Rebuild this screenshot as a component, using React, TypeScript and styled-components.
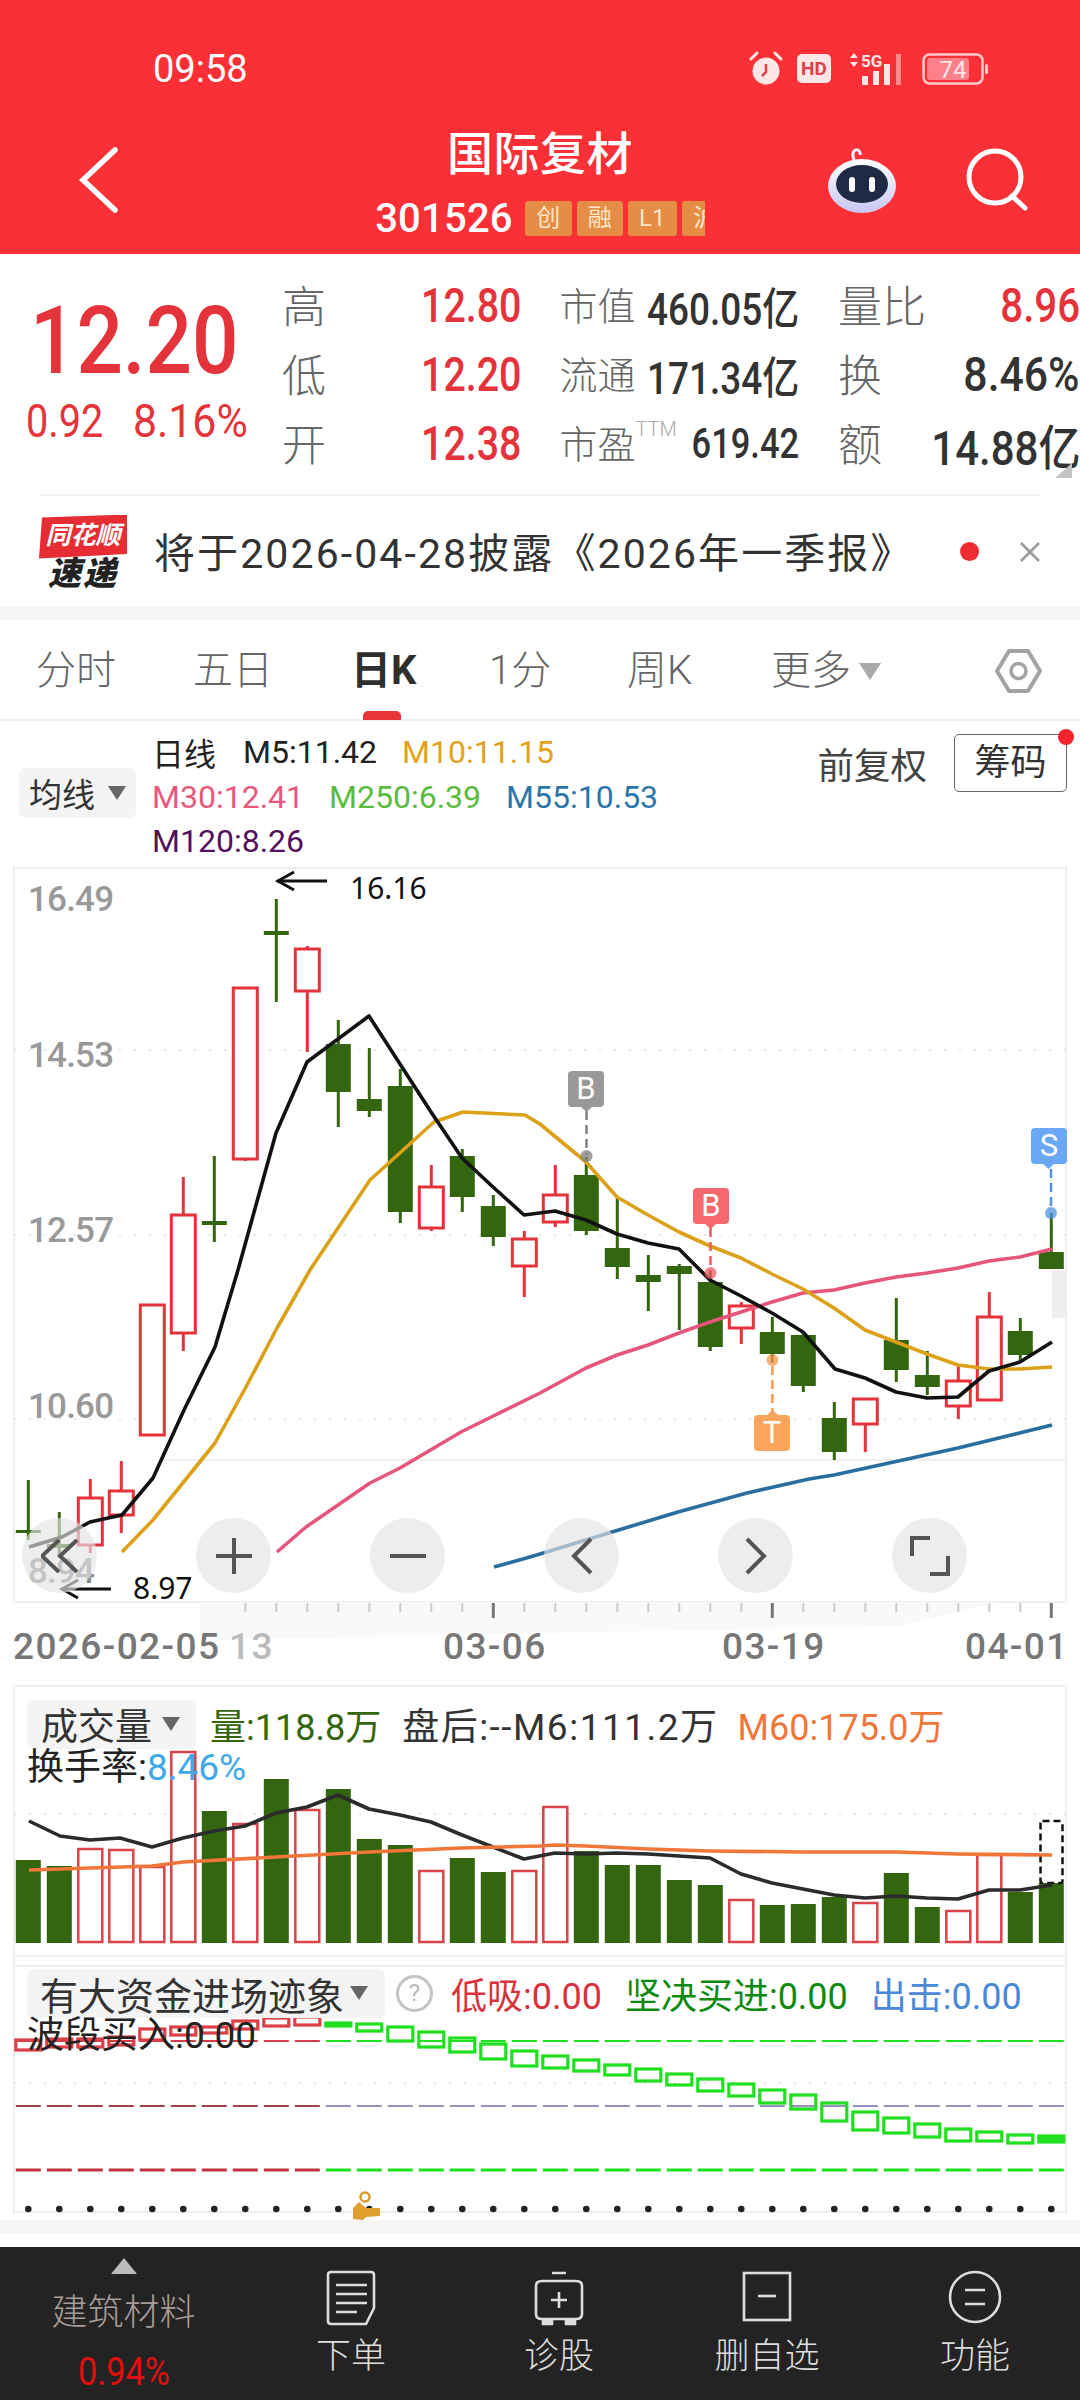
import React from "react";
import styled, { createGlobalStyle } from "styled-components";

const colors = {
  red: "#fb2f36",
  up: "#e4333a",
  down: "#33660f",
  text: "#333333",
  gray: "#666666",
  axis: "#999999",
  line: "#eeeeee",
  bright: "#1fe01f",
};

const cjk = `"Noto Sans CJK SC", sans-serif`;
const roboto = `Roboto, ${cjk}`;

const GlobalStyle = createGlobalStyle`
  html, body { margin: 0; padding: 0; background: #fff; }
  body { font-family: ${roboto}; }
  * { box-sizing: border-box; }
`;

const Page = styled.div`
  position: relative;
  width: 1080px;
  height: 2400px;
  overflow: hidden;
  display: flex;
  flex-direction: column;
  background: #fff;
`;

/* header */
const Header = styled.header`
  height: 254px;
  background: ${colors.red};
  color: #fff;
  flex: none;
`;

const StatusBar = styled.div`
  display: flex;
  justify-content: space-between;
  align-items: center;
  height: 40px;
  margin-top: 49px;
  padding: 0 92px 0 153px;
`;

const Clock = styled.span`
  font-size: 38px;
  line-height: 40px;
`;

const StatusIcons = styled.div`
  display: flex;
  align-items: center;
`;

const HeadRow = styled.div`
  display: grid;
  grid-template-columns: 1fr auto 1fr;
  align-items: center;
  margin-top: 37px;
`;

const BackIcon = styled.svg`
  margin-left: 78px;
  margin-top: -6px;
  display: block;
`;

const TitleBlock = styled.div`
  display: flex;
  flex-direction: column;
  align-items: center;
`;

const Title = styled.div`
  font-size: 46px;
  line-height: 58px;
  font-weight: 500;
  letter-spacing: 0.5px;
  margin-top: -1px;
`;

const CodeRow = styled.div`
  display: flex;
  align-items: center;
  gap: 12px;
  margin-top: 13px;
  height: 44px;
`;

const Code = styled.span`
  font-size: 40px;
  font-weight: 500;
  letter-spacing: 0.2px;
`;

const TagStrip = styled.div`
  display: flex;
  gap: 5px;
  width: 180px;
  overflow: hidden;
`;

const Tag = styled.span`
  flex: none;
  width: ${(p) => p.$w ?? 47}px;
  height: 35px;
  border-radius: 3px;
  background: #e58d45;
  color: #ffe6c8;
  font-size: 24px;
  line-height: 35px;
  text-align: center;
`;

const HeadTools = styled.div`
  display: flex;
  justify-content: flex-end;
  align-items: center;
  gap: 69px;
  padding-right: 52px;
  margin-top: -6px;
`;

/* quote: the reference digits are tall and narrow, so they are squeezed sideways */
const Quote = styled.section`
  display: flex;
  height: 240px;
  flex: none;
`;

const PriceBox = styled.div`
  width: 282px;
  flex: none;
  padding-top: 46px;
  color: ${colors.up};
`;

const Price = styled.div`
  font-size: 95px;
  font-weight: 500;
  line-height: 82px;
  padding-left: 30px;
  transform: scaleX(0.86);
  transform-origin: 30px 50%;
`;

const PriceDelta = styled.div`
  display: flex;
  gap: 17px;
  margin-top: 19px;
  padding-left: 26px;
  font-size: 46px;
  line-height: 40px;
`;

const DeltaValue = styled.span`
  display: inline-block;
  transform: scaleX(${(p) => p.$sx});
  transform-origin: 0 50%;
`;

const StatGrid = styled.div`
  display: grid;
  grid-template-columns: 239px 240px 242px;
  grid-auto-rows: 69px;
  column-gap: 38.5px;
  padding-top: 17px;
  height: 225px;
`;

const Stat = styled.div`
  display: flex;
  justify-content: space-between;
  align-items: center;
  white-space: nowrap;
`;

const StatLabel = styled.span`
  font-size: ${(p) => p.$size ?? 44}px;
  color: ${colors.gray};
  font-weight: 300;
  display: flex;
  align-items: flex-start;
  margin-top: -4px;
`;

const Ttm = styled.sup`
  font-size: 20px;
  line-height: 30px;
  color: #aaa;
  font-family: Roboto, sans-serif;
`;

const StatValue = styled.span`
  display: inline-block;
  margin-left: -80px;
  font-size: ${(p) => p.$size ?? 48}px;
  font-weight: 500;
  color: ${(p) => p.$color ?? "#333"};
  transform: scaleX(${(p) => p.$sx ?? 0.82});
  transform-origin: 100% 50%;
`;

const Corner = styled.div`
  position: absolute;
  left: 1055px;
  top: 463px;
  width: 0;
  height: 0;
  border-left: 17px solid transparent;
  border-bottom: 15px solid #c4c4c4;
`;

/* notice */
const Notice = styled.section`
  position: relative;
  display: flex;
  align-items: center;
  height: 113px;
  flex: none;
  margin: 0 40px;
  border-top: 2px solid #f1f1f1;
`;

const Logo = styled.div`
  width: 88px;
  display: flex;
  flex-direction: column;
  align-items: center;
  flex: none;
  margin-left: -1px;
`;

const LogoTag = styled.div`
  width: 88px;
  height: 44px;
  background: #e52d33;
  color: #fff;
  font-size: 25px;
  font-weight: 700;
  font-style: italic;
  line-height: 42px;
  text-align: center;
  white-space: nowrap;
  clip-path: polygon(3px 3px, 100% 0, 100% 90%, 0 100%);
`;

const LogoText = styled.div`
  font-size: 33px;
  font-weight: 900;
  font-style: italic;
  line-height: 30px;
  letter-spacing: 2px;
  color: #222;
`;

const NoticeText = styled.div`
  font-size: 41px;
  color: ${colors.text};
  margin: -3px 0 0 27px;
  letter-spacing: 2.1px;
  white-space: nowrap;
  flex: 1;
`;

const RedDot = styled.span`
  width: 19px;
  height: 19px;
  border-radius: 50%;
  background: #f02c30;
  flex: none;
  margin-right: 40px;
`;

const Band = styled.div`
  height: ${(p) => p.$h}px;
  background: ${(p) => p.$bg ?? "#f6f6f6"};
  flex: none;
`;

/* tabs */
const Tabs = styled.nav`
  position: relative;
  height: 101px;
  flex: none;
  display: flex;
  align-items: center;
  padding: 0 0 0 36px;
  border-bottom: 2px solid #eeeeee;
`;

const TabItem = styled.span`
  font-size: 40px;
  line-height: 56px;
  width: ${(p) => p.$w}px;
  flex: none;
  margin-top: 3px;
  display: flex;
  align-items: center;
  color: ${(p) => (p.$active ? "#2f2f2f" : colors.gray)};
  font-weight: ${(p) => (p.$active ? 700 : 300)};
  &::after {
    content: "";
    display: ${(p) => (p.$active ? "block" : "none")};
    position: absolute;
    left: 363px;
    bottom: -1px;
    width: 38px;
    height: 9px;
    border-radius: 5px 5px 0 0;
    background: #e9343a;
  }
`;

const Caret = styled.i`
  display: inline-block;
  width: 0;
  height: 0;
  flex: none;
  margin-left: ${(p) => p.$gap ?? 8}px;
  border-left: ${(p) => p.$w ?? 9}px solid transparent;
  border-right: ${(p) => p.$w ?? 9}px solid transparent;
  border-top: ${(p) => p.$h ?? 14}px solid ${(p) => p.$color ?? "#aaa"};
`;

/* legend */
const Legend = styled.section`
  height: 147px;
  flex: none;
  position: relative;
  display: flex;
  padding-left: 19px;
`;

const Pill = styled.div`
  width: ${(p) => p.$w}px;
  height: ${(p) => p.$h ?? 50}px;
  flex: none;
  display: flex;
  align-items: center;
  padding-left: ${(p) => p.$pad ?? 10}px;
  background: #f5f4f4;
  border-radius: 7px;
  font-size: ${(p) => p.$size ?? 33}px;
  color: ${colors.text};
  white-space: nowrap;
`;

const LegendPillWrap = styled.div`
  margin-top: 47px;
`;

const LegendLines = styled.div`
  margin-left: 16px;
  padding-top: 9px;
  display: flex;
  flex-direction: column;
`;

const LegendRow = styled.div`
  display: flex;
  gap: 25px;
  height: 44.5px;
  align-items: center;
  font-size: 32px;
  white-space: nowrap;
`;

const Ma = styled.span`
  color: ${(p) => p.$color};
  margin-left: ${(p) => p.$shift ?? 0}px;
`;

const LegendTools = styled.div`
  position: absolute;
  right: 13px;
  top: 13px;
  display: flex;
  align-items: center;
  gap: 27px;
`;

const Fq = styled.span`
  font-size: 36.5px;
  color: #444;
`;

const ChipBtn = styled.div`
  position: relative;
  width: 113px;
  height: 58px;
  border: 1.5px solid #666;
  border-radius: 5px;
  font-size: 36px;
  line-height: 56px;
  text-align: center;
  color: #333;
  &::after {
    content: "";
    position: absolute;
    right: -8px;
    top: -6px;
    width: 16px;
    height: 16px;
    border-radius: 50%;
    background: #f5242c;
  }
`;

/* charts */
const ChartBox = styled.section`
  position: relative;
  width: 1080px;
  height: ${(p) => p.$h}px;
  flex: none;
`;

const ChartSvg = styled.svg`
  position: absolute;
  left: 0;
  top: 0;
  overflow: visible;
  display: block;
`;

const PriceTick = styled.span`
  position: absolute;
  left: 28px;
  top: ${(p) => p.$y}px;
  font-size: 35px;
  font-weight: 500;
  line-height: 36px;
  letter-spacing: -0.8px;
  color: ${(p) => p.$color ?? colors.axis};
`;

const Extreme = styled.span`
  position: absolute;
  left: ${(p) => p.$x}px;
  top: ${(p) => p.$y}px;
  font-family: "Noto Sans", sans-serif;
  font-size: 30px;
  line-height: 36px;
  color: #111;
`;

const Signal = styled.div`
  position: absolute;
  left: ${(p) => p.$x}px;
  top: ${(p) => p.$y}px;
  width: 36px;
  height: 36px;
  border-radius: 4px;
  background: ${(p) => p.$color};
  color: #fff;
  font-size: 31px;
  line-height: 36px;
  text-align: center;
`;

const Controls = styled.div`
  position: absolute;
  left: 22px;
  top: 650px;
  display: flex;
  gap: 99px;
`;

const Round = styled.div`
  width: 75px;
  height: 75px;
  border-radius: 50%;
  background: rgba(228, 228, 228, 0.65);
  display: flex;
  align-items: center;
  justify-content: center;
`;

const DateTick = styled.span`
  position: absolute;
  left: ${(p) => p.$x}px;
  top: 23px;
  font-size: 37px;
  font-weight: 500;
  line-height: 44px;
  letter-spacing: 1.4px;
  color: ${(p) => p.$color ?? "#777"};
  white-space: nowrap;
`;

const PanelHead = styled.div`
  position: relative;
  display: flex;
  align-items: center;
  gap: ${(p) => p.$gap ?? 21}px;
  padding-left: 27px;
  padding-top: ${(p) => p.$top}px;
  white-space: nowrap;
  font-size: 36px;
`;

const PanelLine = styled.div`
  position: relative;
  padding-left: 27px;
  margin-top: -3px;
  height: 40px;
  line-height: 40px;
  font-size: 37px;
  color: ${(p) => p.$color ?? "#222"};
  white-space: nowrap;
`;

const Colored = styled.span`
  color: ${(p) => p.$color};
  margin-left: ${(p) => p.$shift ?? 0}px;
  letter-spacing: ${(p) => p.$track ?? 0}px;
  font-size: ${(p) => p.$size ?? 36}px;
`;

const Help = styled.span`
  width: 37px;
  height: 37px;
  border-radius: 50%;
  border: 3px solid #c4c4c4;
  color: #bbb;
  font-size: 24px;
  line-height: 31px;
  text-align: center;
  flex: none;
  margin: 0 -5px 0 -12px;
`;

/* bottom bar */
const BottomBar = styled.footer`
  height: 153px;
  flex: none;
  background: #232323;
  display: grid;
  grid-template-columns: 247px repeat(4, 208px);
`;

const Sector = styled.div`
  display: flex;
  flex-direction: column;
  align-items: center;
  padding: 11px 0 0 0;
`;

const UpTriangle = styled.i`
  width: 0;
  height: 0;
  border-left: 13px solid transparent;
  border-right: 13px solid transparent;
  border-bottom: 16px solid #bbbbbb;
`;

const SectorName = styled.span`
  font-size: 36px;
  line-height: 44px;
  margin-top: 17px;
  color: #a89c98;
  font-weight: 300;
`;

const SectorPct = styled.span`
  font-size: 38px;
  line-height: 44px;
  margin-top: 15px;
  color: #e01010;
  transform: scaleX(0.9);
`;

const BarItem = styled.div`
  display: flex;
  flex-direction: column;
  align-items: center;
  padding-top: 23px;
  color: #dddddd;
  font-size: 35px;
  line-height: 44px;
  font-weight: 300;
`;

const BarIcon = styled.svg`
  display: block;
  margin-bottom: 9px;
`;

/* data: every candle sits at xAt(i), values are pixel rows of the chart */
const xAt = (i: number) => 28.3 + 31 * i;

type Candle = [number, number, number, number, boolean];
const candles: Candle[] = [
  [1480, 1530, 1533, 1540, false],
  [1512, 1544, 1548, 1557, false],
  [1479, 1498, 1545, 1553, true],
  [1461, 1491, 1515, 1533, true],
  [1305, 1305, 1435, 1436, true],
  [1177, 1215, 1333, 1351, true],
  [1156, 1221, 1225, 1242, false],
  [988, 988, 1159, 1161, true],
  [899, 931, 935, 1002, false],
  [946, 949, 991, 1052, true],
  [1020, 1044, 1092, 1127, false],
  [1048, 1099, 1111, 1117, false],
  [1069, 1086, 1212, 1223, false],
  [1165, 1187, 1228, 1231, true],
  [1149, 1156, 1197, 1212, false],
  [1195, 1206, 1237, 1246, false],
  [1231, 1239, 1266, 1297, true],
  [1165, 1195, 1222, 1227, true],
  [1157, 1175, 1231, 1235, false],
  [1197, 1248, 1267, 1279, false],
  [1255, 1275, 1282, 1311, false],
  [1264, 1266, 1274, 1330, false],
  [1270, 1282, 1347, 1351, false],
  [1302, 1306, 1328, 1344, true],
  [1317, 1332, 1354, 1363, false],
  [1331, 1335, 1386, 1392, false],
  [1402, 1418, 1452, 1460, false],
  [1399, 1399, 1424, 1452, true],
  [1298, 1340, 1370, 1382, false],
  [1351, 1375, 1387, 1395, false],
  [1366, 1381, 1406, 1419, true],
  [1292, 1317, 1400, 1400, true],
  [1318, 1331, 1355, 1362, false],
  [1213, 1252, 1269, 1269, false],
];

const m5 = "29,1547 62,1537 90,1522 122,1515 153,1478 184,1410 215,1347 238,1270 276,1133 307,1062 369,1016 400,1064 431,1112 462,1158 493,1187 524,1215 555,1211 586,1220 617,1234 648,1243 679,1249 710,1280 741,1296 772,1313 803,1332 835,1369 865,1378 896,1392 927,1398 958,1397 989,1371 1020,1362 1052,1342";
const m10 = "122,1552 153,1520 215,1443 246,1387 277,1328 310,1270 370,1180 434,1122 463,1112 525,1115 540,1124 586,1162 617,1197 648,1215 679,1232 710,1246 741,1258 772,1274 803,1289 834,1308 865,1330 896,1342 927,1354 958,1365 989,1369 1020,1369 1052,1367";
const m30 = "277,1552 306,1527 370,1483 400,1468 461,1432 540,1393 586,1368 617,1355 648,1345 679,1333 710,1322 741,1312 772,1302 803,1293 834,1290 865,1283 896,1277 927,1273 958,1268 989,1261 1020,1257 1052,1249";
const m55 = "494,1567 523,1559 540,1554 612,1532 678,1512 747,1493 809,1479 834,1475 958,1448 1052,1425";

const volumes: [number, boolean][] = [
  [1860, false], [1866, false], [1849, true], [1850, true], [1867, true], [1752, true], [1811, false],
  [1824, true], [1779, false], [1810, true], [1789, false], [1839, false], [1845, false], [1871, true],
  [1858, false], [1872, false], [1871, true], [1807, true], [1851, false], [1865, false], [1865, false],
  [1880, false], [1885, false], [1900, true], [1905, false], [1904, false], [1897, false], [1903, true],
  [1873, false], [1907, false], [1911, true], [1855, true], [1892, false], [1883, false],
];

const m6 = "29,1821 60,1836 90,1840 120,1838 152,1847 183,1838 214,1831 245,1826 276,1813 307,1807 338,1795 369,1809 400,1815 431,1822 462,1835 493,1847 524,1859 555,1853 586,1854 617,1853 648,1854 679,1856 710,1858 741,1874 772,1883 803,1889 834,1895 865,1898 896,1896 927,1898 958,1899 989,1890 1020,1890 1052,1885";
const m60 = "29,1870 152,1866 183,1862 276,1857 369,1852 462,1848 540,1846 555,1845 586,1846 648,1849 710,1851 803,1852 896,1852 958,1854 1052,1855";

const waves: [number, number][] = [
  [2040, 2050], [2039, 2047], [2039, 2047], [2037, 2045], [2029, 2040], [2027, 2035], [2027, 2033], [2021, 2029],
  [2018, 2026], [2017, 2025], [2023, 2026], [2024, 2031], [2027, 2041], [2032, 2047], [2038, 2052], [2044, 2059],
  [2051, 2066], [2056, 2068], [2060, 2071], [2065, 2075], [2069, 2081], [2074, 2085], [2079, 2091], [2084, 2096],
  [2090, 2103], [2095, 2109], [2103, 2121], [2112, 2130], [2118, 2133], [2124, 2137], [2129, 2141], [2132, 2141],
  [2135, 2143], [2136, 2142],
];

const indices = candles.map((_, i) => i);

function DottedGrid({ rows }: { rows: number[] }) {
  return (
    <>
      {rows.map((y) => (
        <line key={y} x1="14" x2="1066" y1={y} y2={y} stroke="#e4e4e4" strokeWidth="2" strokeDasharray="2 13" />
      ))}
    </>
  );
}

function Frame({ top, bottom }: { top: number; bottom: number }) {
  return <rect x="14" y={top} width="1052" height={bottom - top} fill="none" stroke="#eeeeee" strokeWidth="2" />;
}

function MaLine({ points, color, width = 3.6 }: { points: string; color: string; width?: number }) {
  return <polyline points={points} fill="none" stroke={color} strokeWidth={width} strokeLinejoin="round" />;
}

function Arrow({ x, y }: { x: number; y: number }) {
  return (
    <g fill="none" stroke="#111" strokeWidth="3">
      <line x1={x} x2={x + 50} y1={y} y2={y} />
      <polyline points={`${x + 17},${y - 9} ${x + 1},${y} ${x + 17},${y + 9}`} />
    </g>
  );
}

function Stem({ x, from, to, color, r }: { x: number; from: number; to: number; color: string; r: number }) {
  return (
    <g>
      <line x1={x} x2={x} y1={from} y2={to} stroke={color} strokeWidth="2.5" strokeDasharray="9 5" />
      <circle cx={x} cy={r} r="6" fill={color} opacity="0.75" />
    </g>
  );
}

function PriceChart() {
  return (
    <ChartSvg width="1080" height="734" viewBox="0 868 1080 734">
      <Frame top={868} bottom={1602} />
      <DottedGrid rows={[1050, 1235, 1419]} />
      <line x1="160" x2="1066" y1="1460" y2="1460" stroke="#eeeeee" strokeWidth="2" />
      <rect x="1052" y="1270" width="14" height="48" fill="#eeeeee" />
      {candles.map(([high, top, bottom, low, up], i) => {
        const x = xAt(i);
        const color = up ? colors.up : colors.down;
        return (
          <g key={i}>
            <line x1={x} x2={x} y1={high} y2={low} stroke={color} strokeWidth="3" />
            {up ? (
              <rect x={x - 12} y={top} width="24" height={bottom - top} fill="#fff" stroke={color} strokeWidth="3" />
            ) : (
              <rect x={x - 12.5} y={top} width="25" height={bottom - top} fill={color} />
            )}
          </g>
        );
      })}
      <MaLine points={m55} color="#2a6ea0" />
      <MaLine points={m30} color="#e5567a" />
      <MaLine points={m10} color="#dca019" />
      <MaLine points={m5} color="#111111" />
      <Arrow x={277} y={881} />
      <Arrow x={61} y={1589} />
      <Stem x={586.5} from={1111} to={1155} r={1156} color="#808080" />
      <Stem x={710.5} from={1228} to={1272} r={1273} color="#ee5a60" />
      <Stem x={772.4} from={1366} to={1412} r={1360} color="#f39a4e" />
      <Stem x={1051} from={1169} to={1211} r={1213} color="#4f94e6" />
      <polygon points="581,1107 592,1107 586.5,1112" fill="#999" />
      <polygon points="705,1224 716,1224 710.5,1229" fill="#f4686e" />
      <polygon points="767,1415 778,1415 772.5,1410" fill="#fba45c" />
      <polygon points="1043,1164 1054,1164 1048.5,1169" fill="#6aa8f5" />
    </ChartSvg>
  );
}

function AxisTicks() {
  const big = [15, 24, 33];
  return (
    <ChartSvg width="1080" height="83" viewBox="0 1602 1080 83">
      <polygon points="200,1602 1000,1602 900,1626 600,1632 200,1640" fill="#faf9f9" />
      {indices.slice(7).map((i) =>
        big.includes(i) ? (
          <line key={i} x1={xAt(i)} x2={xAt(i)} y1="1603" y2="1618" stroke="#777" strokeWidth="3" />
        ) : (
          <line key={i} x1={xAt(i)} x2={xAt(i)} y1="1603" y2="1612" stroke="#ccc" strokeWidth="2" />
        ),
      )}
    </ChartSvg>
  );
}

function VolumeChart() {
  return (
    <ChartSvg width="1080" height="270" viewBox="0 1685 1080 270">
      <rect x="14" y="1686" width="1052" height="280" fill="none" stroke="#eeeeee" strokeWidth="2" />
      <DottedGrid rows={[1814]} />
      {volumes.map(([top, up], i) => {
        const x = xAt(i);
        return up ? (
          <rect key={i} x={x - 12} y={top} width="24" height={1942 - top} fill="#fff" stroke="#d9434a" strokeWidth="2.5" />
        ) : (
          <rect key={i} x={x - 12.5} y={top} width="25" height={1943 - top} fill={colors.down} />
        );
      })}
      <rect x="1040.5" y="1821" width="22" height="62" fill="none" stroke="#111" strokeWidth="2.5" strokeDasharray="7 4" rx="2" />
      <MaLine points={m6} color="#2b2b2b" />
      <MaLine points={m60} color="#f0763a" />
    </ChartSvg>
  );
}

function WaveChart() {
  return (
    <ChartSvg width="1080" height="265" viewBox="0 1955 1080 265">
      <rect x="14" y="1956" width="1052" height="256" fill="none" stroke="#eeeeee" strokeWidth="2" />
      <DottedGrid rows={[2083]} />
      <rect x="357" y="2009" width="24" height="9" fill="#7fe07f" />
      {indices.map((i) => {
        const x = xAt(i);
        const buy = i < 10;
        return (
          <g key={i}>
            <line x1={x - 12.5} x2={x + 12.5} y1="2041" y2="2041" stroke={buy ? "#d23e46" : colors.bright} strokeWidth="2" />
            <line x1={x - 12.5} x2={x + 12.5} y1="2106" y2="2106" stroke={buy ? "#a8404a" : "#9a90c0"} strokeWidth="2" />
            <line x1={x - 12.5} x2={x + 12.5} y1="2170" y2="2170" stroke={buy ? "#c0323e" : colors.bright} strokeWidth="3" />
            <circle cx={x} cy="2209" r="3.3" fill="#222" />
          </g>
        );
      })}
      {waves.map(([top, bottom], i) => {
        const x = xAt(i);
        const color = i < 10 ? "#dd3f48" : colors.bright;
        return (
          <rect
            key={i}
            x={x - 12.5}
            y={top}
            width="25"
            height={bottom - top}
            fill={i === 33 || i === 10 ? color : "none"}
            stroke={color}
            strokeWidth="3.2"
          />
        );
      })}
      <g>
        <circle cx="365" cy="2197" r="4.5" fill="none" stroke="#d99a2b" strokeWidth="2.5" />
        <path d="M353 2219 L353 2208 L359 2202 L366 2208 L380 2208 L380 2216 L366 2217 L363 2220 Z" fill="#e0a030" />
      </g>
    </ChartSvg>
  );
}

function AlarmIcon() {
  return (
    <svg width="36" height="36" viewBox="0 0 36 36">
      <circle cx="18" cy="20" r="13.5" fill="#ffe6e6" />
      <path d="M3 8 L9 2 M33 8 L27 2" stroke="#ffe6e6" strokeWidth="3" strokeLinecap="round" />
      <path d="M18 13 L18 21 L14 25" stroke="#e04048" strokeWidth="2.5" fill="none" />
    </svg>
  );
}

function HdIcon() {
  return (
    <svg width="34" height="30" viewBox="0 0 34 30" style={{ marginLeft: 13 }}>
      <rect width="34" height="29" rx="5" fill="#ffe6e6" />
      <text x="17" y="21" textAnchor="middle" fontSize="19" fontWeight="700" fontFamily="Roboto" fill="#e04048">
        HD
      </text>
    </svg>
  );
}

function SignalIcon() {
  return (
    <svg width="60" height="36" viewBox="0 0 60 36" style={{ marginLeft: 15 }}>
      <path d="M4 7 L8 2 L12 7 Z M4 11 L12 11 L8 16 Z" fill="#ffe6e6" />
      <text x="15" y="16" fontSize="17" fontWeight="700" fontFamily="Roboto" fill="#ffe6e6">
        5G
      </text>
      <rect x="16" y="25" width="6" height="9" fill="#ffe6e6" />
      <rect x="27" y="20" width="6" height="14" fill="#ffe6e6" />
      <rect x="38" y="13" width="6" height="21" fill="#ffe6e6" />
      <rect x="50" y="3" width="5" height="31" fill="#ff8a8a" />
    </svg>
  );
}

function BatteryIcon() {
  return (
    <svg width="66" height="32" viewBox="0 0 66 32" style={{ marginLeft: 16 }}>
      <rect x="1.5" y="1.5" width="59" height="29" rx="6" fill="none" stroke="#ffc9c9" strokeWidth="2.5" />
      <rect x="5" y="5" width="42" height="22" rx="3" fill="#ff8088" />
      <rect x="63" y="11" width="3" height="10" rx="1.5" fill="#ffc9c9" />
      <text x="31" y="25" textAnchor="middle" fontSize="24" fontFamily="Roboto" fill="#ffe6e6">
        74
      </text>
    </svg>
  );
}

function RobotIcon() {
  return (
    <svg width="70" height="66" viewBox="0 0 70 66">
      <defs>
        <linearGradient id="robotShell" x1="0" y1="0" x2="0" y2="1">
          <stop offset="0" stopColor="#ffffff" />
          <stop offset="1" stopColor="#c7c6f2" />
        </linearGradient>
      </defs>
      <path d="M28 18 C27 10 24 8 27 4 C30 1 34 4 33 8" fill="none" stroke="#eeeeff" strokeWidth="3" />
      <ellipse cx="35" cy="39" rx="34" ry="27" fill="url(#robotShell)" />
      <ellipse cx="35" cy="37" rx="26" ry="19" fill="#1f2a44" />
      <rect x="22" y="30" width="6" height="15" rx="3" fill="#fff" />
      <rect x="42" y="30" width="6" height="15" rx="3" fill="#fff" />
    </svg>
  );
}

function SearchIcon() {
  return (
    <svg width="62" height="64" viewBox="0 0 62 64" fill="none" stroke="#fff" strokeWidth="5">
      <circle cx="29" cy="29" r="26" />
      <path d="M46 48 L59 60" strokeLinecap="round" />
    </svg>
  );
}

function HexIcon() {
  return (
    <svg width="47" height="46" viewBox="0 0 47 46" fill="none" stroke="#a3a3a3" strokeWidth="4" strokeLinejoin="round" style={{ position: "absolute", left: 995, top: 28 }}>
      <path d="M14 3 L33 3 L45 23 L33 43 L14 43 L2 23 Z" />
      <circle cx="23.5" cy="23" r="7.5" strokeWidth="3.5" />
    </svg>
  );
}

function IconStroke({ children }: { children: React.ReactNode }) {
  return (
    <BarIcon width="62" height="56" viewBox="0 0 62 56" fill="none" stroke="#dddddd" strokeWidth="2.6">
      {children}
    </BarIcon>
  );
}

export default function App() {
  return (
    <Page>
      <GlobalStyle />
      <Header>
        <StatusBar>
          <Clock>09:58</Clock>
          <StatusIcons>
            <AlarmIcon />
            <HdIcon />
            <SignalIcon />
            <BatteryIcon />
          </StatusIcons>
        </StatusBar>
        <HeadRow>
          <BackIcon width="40" height="66" viewBox="0 0 40 66" fill="none" stroke="#fff" strokeWidth="5.5">
            <polyline points="37,3 5,33 37,63" strokeLinecap="round" />
          </BackIcon>
          <TitleBlock>
            <Title>国际复材</Title>
            <CodeRow>
              <Code>301526</Code>
              <TagStrip>
                <Tag>创</Tag>
                <Tag $w={46}>融</Tag>
                <Tag $w={49}>L1</Tag>
                <Tag>沪</Tag>
              </TagStrip>
            </CodeRow>
          </TitleBlock>
          <HeadTools>
            <RobotIcon />
            <SearchIcon />
          </HeadTools>
        </HeadRow>
      </Header>

      <Quote>
        <PriceBox>
          <Price>12.20</Price>
          <PriceDelta>
            <DeltaValue $sx={0.86}>0.92</DeltaValue>
            <DeltaValue $sx={0.93}>8.16%</DeltaValue>
          </PriceDelta>
        </PriceBox>
        <StatGrid>
          <Stat>
            <StatLabel>高</StatLabel>
            <StatValue $color={colors.up}>12.80</StatValue>
          </Stat>
          <Stat>
            <StatLabel $size={38}>市值</StatLabel>
            <StatValue $size={44} $sx={0.84}>460.05亿</StatValue>
          </Stat>
          <Stat>
            <StatLabel>量比</StatLabel>
            <StatValue $color={colors.up} $sx={0.84}>8.96</StatValue>
          </Stat>
          <Stat>
            <StatLabel>低</StatLabel>
            <StatValue $color={colors.up}>12.20</StatValue>
          </Stat>
          <Stat>
            <StatLabel $size={38}>流通</StatLabel>
            <StatValue $size={44} $sx={0.84}>171.34亿</StatValue>
          </Stat>
          <Stat>
            <StatLabel>换</StatLabel>
            <StatValue $sx={0.89}>8.46%</StatValue>
          </Stat>
          <Stat>
            <StatLabel>开</StatLabel>
            <StatValue $color={colors.up}>12.38</StatValue>
          </Stat>
          <Stat>
            <StatLabel $size={38}>
              市盈<Ttm>TTM</Ttm>
            </StatLabel>
            <StatValue $size={42}>619.42</StatValue>
          </Stat>
          <Stat>
            <StatLabel>额</StatLabel>
            <StatValue $sx={0.875}>14.88亿</StatValue>
          </Stat>
        </StatGrid>
        <Corner />
      </Quote>

      <Notice>
        <Logo>
          <LogoTag>同花顺</LogoTag>
          <LogoText>速递</LogoText>
        </Logo>
        <NoticeText>将于2026-04-28披露《2026年一季报》</NoticeText>
        <RedDot />
        <svg width="22" height="22" viewBox="0 0 22 22" stroke="#9a9a9a" strokeWidth="2.5" style={{ marginRight: -1 }}>
          <path d="M2 2 L20 20 M20 2 L2 20" />
        </svg>
      </Notice>
      <Band $h={13} />

      <Tabs>
        <TabItem $w={157}>分时</TabItem>
        <TabItem $w={158}>五日</TabItem>
        <TabItem $w={138} $active>
          日K
        </TabItem>
        <TabItem $w={138}>1分</TabItem>
        <TabItem $w={144}>周K</TabItem>
        <TabItem $w={150}>
          更多
          <Caret $w={11} $h={17} />
        </TabItem>
        <HexIcon />
      </Tabs>

      <Legend>
        <LegendPillWrap>
          <Pill $w={117} $pad={10}>
            均线
            <Caret $gap={13} $color="#666" />
          </Pill>
        </LegendPillWrap>
        <LegendLines>
          <LegendRow>
            <Ma $color="#222">日线</Ma>
            <Ma $color="#222" $shift={2}>M5:11.42</Ma>
            <Ma $color="#e3a21d">M10:11.15</Ma>
          </LegendRow>
          <LegendRow>
            <Ma $color="#e9587c">M30:12.41</Ma>
            <Ma $color="#5bbb3e">M250:6.39</Ma>
            <Ma $color="#2a76ab">M55:10.53</Ma>
          </LegendRow>
          <LegendRow>
            <Ma $color="#560f5c">M120:8.26</Ma>
          </LegendRow>
        </LegendLines>
        <LegendTools>
          <Fq>前复权</Fq>
          <ChipBtn>筹码</ChipBtn>
        </LegendTools>
      </Legend>

      <ChartBox $h={734}>
        <PriceChart />
        <PriceTick $y={14}>16.49</PriceTick>
        <PriceTick $y={170}>14.53</PriceTick>
        <PriceTick $y={345}>12.57</PriceTick>
        <PriceTick $y={521}>10.60</PriceTick>
        <PriceTick $y={686} $color="#8a8a8a">
          8.94
        </PriceTick>
        <Extreme $x={350} $y={2}>16.16</Extreme>
        <Extreme $x={133} $y={702}>8.97</Extreme>
        <Signal $x={568} $y={203} $color="#999999">B</Signal>
        <Signal $x={693} $y={320} $color="#f4686e">B</Signal>
        <Signal $x={754} $y={547} $color="#fba45c">T</Signal>
        <Signal $x={1031} $y={260} $color="#6aa8f5">S</Signal>
        <Controls>
          <Round>
            <svg width="38" height="34" viewBox="0 0 38 34" fill="none" stroke="#555" strokeWidth="4">
              <path d="M18 1 L1 17 L18 33 M36 1 L19 17 L36 33" />
            </svg>
          </Round>
          <Round>
            <svg width="36" height="36" viewBox="0 0 36 36" stroke="#555" strokeWidth="4">
              <path d="M0 18 H36 M18 0 V36" />
            </svg>
          </Round>
          <Round>
            <svg width="36" height="6" viewBox="0 0 36 6" stroke="#555" strokeWidth="4">
              <path d="M0 3 H36" />
            </svg>
          </Round>
          <Round>
            <svg width="22" height="38" viewBox="0 0 22 38" fill="none" stroke="#555" strokeWidth="4">
              <path d="M20 2 L3 19 L20 36" />
            </svg>
          </Round>
          <Round>
            <svg width="22" height="38" viewBox="0 0 22 38" fill="none" stroke="#555" strokeWidth="4">
              <path d="M2 2 L19 19 L2 36" />
            </svg>
          </Round>
          <Round>
            <svg width="40" height="40" viewBox="0 0 40 40" fill="none" stroke="#555" strokeWidth="4">
              <path d="M20 2 H2 V20 M38 20 V38 H20" />
            </svg>
          </Round>
        </Controls>
      </ChartBox>

      <ChartBox $h={83}>
        <AxisTicks />
        <DateTick $x={13}>2026-02-05</DateTick>
        <DateTick $x={229} $color="#bbbbbb">13</DateTick>
        <DateTick $x={443}>03-06</DateTick>
        <DateTick $x={722}>03-19</DateTick>
        <DateTick $x={965}>04-01</DateTick>
      </ChartBox>

      <ChartBox $h={270}>
        <VolumeChart />
        <PanelHead $top={12}>
          <Pill $w={169} $h={49} $size={37} $pad={14}>
            成交量
            <Caret $gap={10} $color="#666" />
          </Pill>
          <Colored $color={colors.down} $shift={-7}>量:118.8万</Colored>
          <Colored $color="#333" $track={1.5} $size={37}>盘后:--M6:111.2万</Colored>
          <Colored $color="#f0763a" $shift={-2}>M60:175.0万</Colored>
        </PanelHead>
        <PanelLine>
          换手率:<Colored $color="#3ea9ea" $size={37}>8.46%</Colored>
        </PanelLine>
      </ChartBox>

      <ChartBox $h={265}>
        <WaveChart />
        <PanelHead $top={12} $gap={23}>
          <Pill $w={358} $h={49} $size={38} $pad={13}>
            有大资金进场迹象
            <Caret $gap={6} $color="#666" />
          </Pill>
          <Help>?</Help>
          <Colored $color="#d9323e">低吸:0.00</Colored>
          <Colored $color="#0e8a10">坚决买进:0.00</Colored>
          <Colored $color="#4a88d8">出击:0.00</Colored>
        </PanelHead>
        <PanelLine>波段买入:0.00</PanelLine>
      </ChartBox>
      <Band $h={13} />
      <Band $h={14} $bg="#ffffff" />

      <BottomBar>
        <Sector>
          <UpTriangle />
          <SectorName>建筑材料</SectorName>
          <SectorPct>0.94%</SectorPct>
        </Sector>
        <BarItem>
          <IconStroke>
            <path d="M8 5 Q8 2 11 2 H51 Q54 2 54 5 V38 L46 54 H11 Q8 54 8 51 Z" />
            <path d="M16 15 H47 M16 24 H47 M16 33 H47 M16 42 H37" />
          </IconStroke>
          下单
        </BarItem>
        <BarItem>
          <IconStroke>
            <path d="M24 3 H38 M8 16 Q8 11 14 11 H48 Q54 11 54 16 V44 Q54 49 48 49 H14 Q8 49 8 44 Z" />
            <path d="M31 22 V38 M23 30 H39" />
            <path d="M15 50 H24 V54 H15 Z M38 50 H47 V54 H38 Z" fill="#ddd" />
          </IconStroke>
          诊股
        </BarItem>
        <BarItem>
          <IconStroke>
            <rect x="8" y="3" width="46" height="47" />
            <path d="M22 26 H40" />
          </IconStroke>
          删自选
        </BarItem>
        <BarItem>
          <IconStroke>
            <circle cx="31" cy="27" r="25" />
            <path d="M21 20 H41 M21 34 H41" />
          </IconStroke>
          功能
        </BarItem>
      </BottomBar>
    </Page>
  );
}
